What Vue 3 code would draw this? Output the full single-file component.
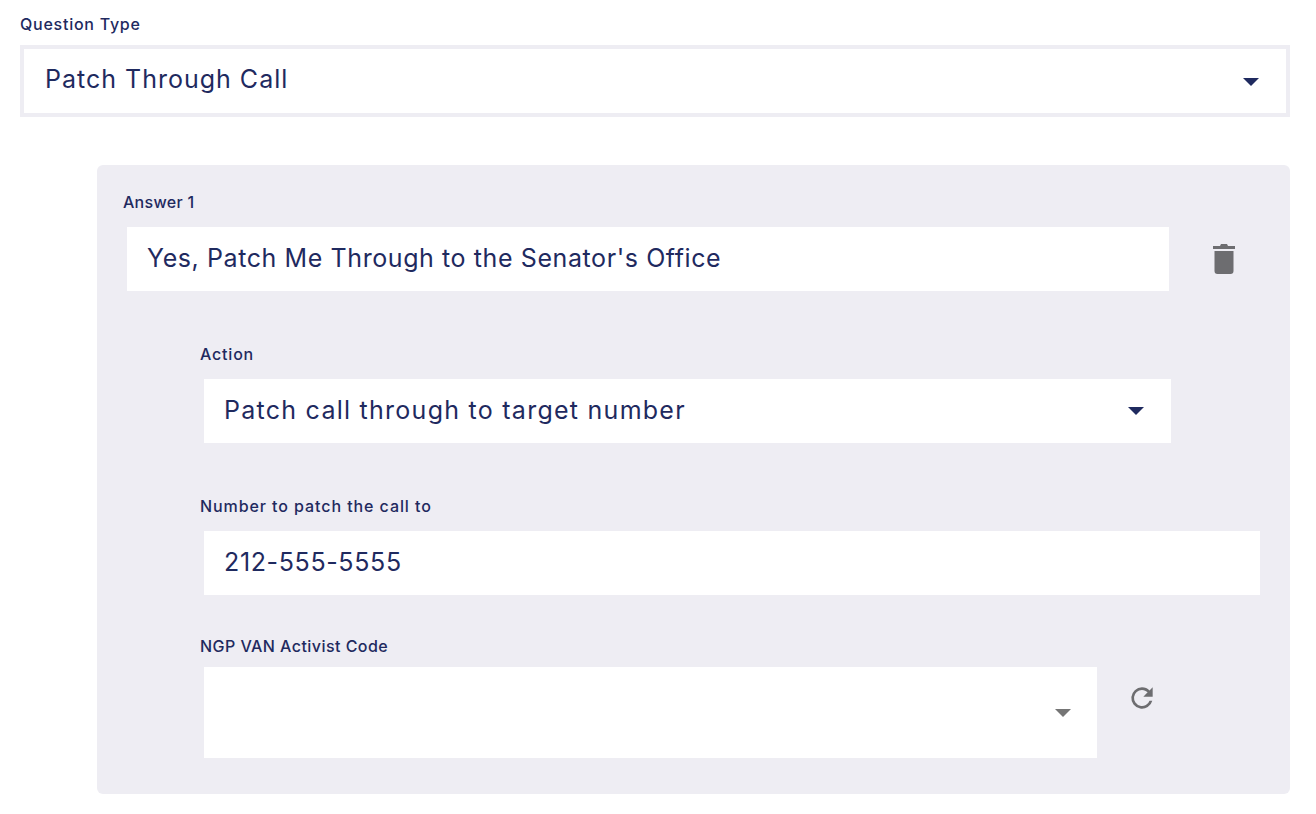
<script setup>
const caretDark = "#1f2a5f";
</script>

<template>
  <div class="page">
    <label class="field-label top-label">Question Type</label>
    <div class="select-box outlined">
      <span class="value type-value">Patch Through Call</span>
      <svg class="caret" viewBox="0 0 16 8" width="16" height="8"><path d="M0 0h16L8 8z" :fill="caretDark" /></svg>
    </div>

    <div class="answer-card">
      <label class="field-label answer-label">Answer 1</label>
      <div class="answer-row">
        <div class="input-box answer-input">
          <span class="value answer-value">Yes, Patch Me Through to the Senator's Office</span>
        </div>
        <svg class="trash" viewBox="0 0 22 30" width="22" height="30">
          <path d="M8 0h6l1 2h7v3H0V2h7zM1.500 7h19v20a3 3 0 0 1-3 3h-13a3 3 0 0 1-3-3z" fill="#6d6d70" />
        </svg>
      </div>

      <div class="nested">
        <label class="field-label action-label">Action</label>
        <div class="input-box action-select">
          <span class="value action-value">Patch call through to target number</span>
          <svg class="caret" viewBox="0 0 16 8" width="16" height="8"><path d="M0 0h16L8 8z" :fill="caretDark" /></svg>
        </div>

        <label class="field-label number-label">Number to patch the call to</label>
        <div class="input-box number-input">
          <span class="value number-value">212-555-5555</span>
        </div>

        <label class="field-label ngp-label">NGP VAN Activist Code</label>
        <div class="ngp-row">
          <div class="input-box ngp-select">
            <svg class="caret" viewBox="0 0 16 8" width="16" height="8"><path d="M0 0h16L8 8z" fill="#757575" /></svg>
          </div>
          <svg class="refresh" viewBox="0 0 24 24" width="32" height="32">
            <path d="M17.650 6.350A7.950 7.950 0 0 0 12 4a8 8 0 1 0 7.730 10h-2.080A6 6 0 1 1 12 6c1.660 0 3.140.69 4.220 1.780L13 11h7V4z" fill="#6d6d70" />
          </svg>
        </div>
      </div>
    </div>
  </div>
</template>

<style>
body {
  background: #fff;
}
</style>

<style scoped>
.page {
  padding: 14px 26px 20px 20px;
  font-family: Inter, "Noto Sans", sans-serif;
  color: #1f2a5f;
}

.field-label {
  display: block;
  height: 20px;
  line-height: 20px;
  font-size: 16px;
  font-weight: 500;
  white-space: nowrap;
}

.top-label {
  margin-bottom: 11px;
  letter-spacing: 0.75px;
}

.value {
  font-size: 25px;
  line-height: 32px;
  white-space: nowrap;
}

.type-value {
  letter-spacing: 1px;
}

.answer-value {
  letter-spacing: 0.59px;
}

.action-value {
  letter-spacing: 1.26px;
}

.number-value {
  letter-spacing: 0.64px;
}

.select-box {
  display: flex;
  align-items: center;
  justify-content: space-between;
  box-sizing: border-box;
  height: 72px;
  padding: 0 27px 0 21px;
  background: #fff;
  border: 4px solid #eeedf3;
}

.select-box .value {
  margin-top: -4px;
}

.select-box .caret {
  margin-top: 2px;
}

.answer-card {
  box-sizing: border-box;
  margin-top: 48px;
  margin-left: 77px;
  height: 629px;
  padding: 27px 26px 0;
  background: #eeedf3;
  border-radius: 6px;
}

.answer-label {
  margin-bottom: 15px;
  letter-spacing: 0.28px;
}

.answer-row {
  display: flex;
  align-items: center;
  padding-left: 4px;
}

.input-box {
  display: flex;
  align-items: center;
  justify-content: space-between;
  box-sizing: border-box;
  height: 64px;
  background: #fff;
}

.input-box .value {
  margin-top: -2px;
}

.answer-input {
  width: 1042px;
  padding: 0 20px;
}

.trash {
  margin-left: 44px;
}

.nested {
  padding-left: 77px;
  margin-top: 53px;
}

.nested .input-box {
  margin-left: 4px;
  padding: 0 27px 0 20px;
}

.action-label {
  letter-spacing: 0.8px;
}

.action-select {
  width: 967px;
  margin-top: 15px;
}

.action-value {
  margin-top: -3px;
}

.number-label {
  margin-top: 53px;
  letter-spacing: 0.92px;
}

.number-input {
  width: 1056px;
  margin-top: 15px;
}

.ngp-label {
  margin-top: 41px;
  letter-spacing: 0.45px;
}

.ngp-row {
  display: flex;
  align-items: flex-start;
  margin-top: 11px;
}

.nested .ngp-select {
  width: 893px;
  height: 91px;
  justify-content: flex-end;
  padding-right: 26px;
}

.ngp-select .caret {
  margin-top: 1px;
}

.refresh {
  margin-left: 29px;
  margin-top: 15px;
}
</style>
